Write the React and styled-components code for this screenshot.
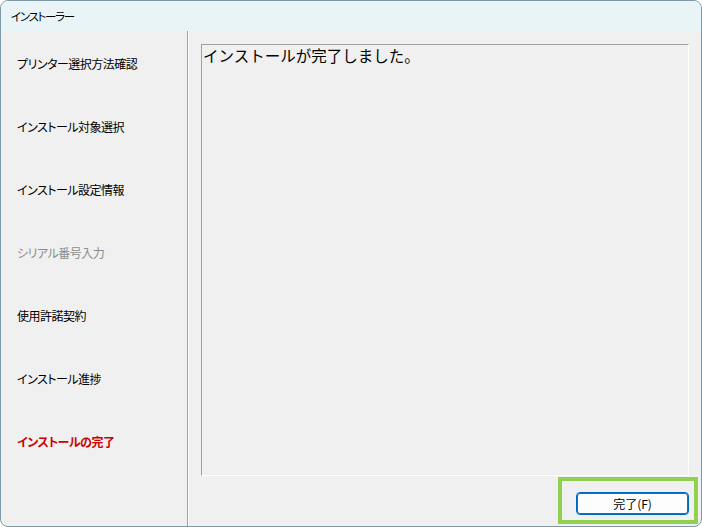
import React from "react";
import styled, { createGlobalStyle } from "styled-components";

const Global = createGlobalStyle`
  html, body { margin: 0; padding: 0; background: #ffffff; }
  body { font-family: "Noto Sans CJK JP", "Noto Sans", sans-serif; }
  * { box-sizing: border-box; }
`;

const Window = styled.div`
  width: 702px;
  height: 527px;
  border: 1px solid #7e99a6;
  border-radius: 8px;
  overflow: hidden;
  display: flex;
  flex-direction: column;
  background: #f0f0f0;
  font-feature-settings: "palt";
`;

const TitleBar = styled.div`
  height: 30px;
  flex: none;
  background: #e9f4f7;
  display: flex;
  align-items: center;
  padding-left: 10px;
  font-size: 11.5px;
  letter-spacing: -1.3px;
  color: #000;
`;

const Body = styled.div`
  flex: 1;
  display: flex;
  min-height: 0;
`;

const Sidebar = styled.div`
  width: 187px;
  flex: none;
  border-right: 1px solid #a0a0a0;
  box-shadow: 1px 0 0 #ffffff;
  padding-top: 1px;
  display: flex;
  flex-direction: column;
`;

const Step = styled.div`
  height: 63px;
  display: flex;
  align-items: center;
  padding-left: 16px;
  font-size: 12px;
  letter-spacing: -0.5px;
  color: ${(p) => (p.$state === "active" ? "#cc0000" : p.$state === "disabled" ? "#8c8c8c" : "#000")};
  font-weight: ${(p) => (p.$state === "active" ? 700 : 400)};
`;

const Main = styled.div`
  flex: 1;
  display: flex;
  flex-direction: column;
  padding: 13px 0 0 13px;
`;

const TextBox = styled.div`
  flex: 1;
  margin-right: 12px;
  border-top: 1px solid #a0a0a0;
  border-left: 1px solid #a0a0a0;
  border-right: 1px solid #ffffff;
  border-bottom: 1px solid #ffffff;
  padding: 0 0 0 1px;
  font-size: 15.5px;
  line-height: 20px;
  font-feature-settings: normal;
  color: #000;
`;

const Footer = styled.div`
  height: 50px;
  flex: none;
  display: flex;
  justify-content: flex-end;
  padding: 1px 3px 2px 0;
`;

const Highlight = styled.div`
  width: 140px;
  height: 47px;
  border: 4px solid #92d050;
  padding: 11px 5px 5px 14px;
  display: flex;
`;

const Button = styled.button`
  width: 113px;
  height: 23px;
  border: 1px solid #0067c0;
  box-shadow: inset 0 0 0 1px #0078d4;
  border-radius: 4px;
  background: #fdfdfd;
  font-family: inherit;
  font-size: 12px;
  color: #000;
  padding: 0;
  display: flex;
  align-items: center;
  justify-content: center;
`;

const steps = [
  ["プリンター選択方法確認", "normal"],
  ["インストール対象選択", "normal"],
  ["インストール設定情報", "normal"],
  ["シリアル番号入力", "disabled"],
  ["使用許諾契約", "normal"],
  ["インストール進捗", "normal"],
  ["インストールの完了", "active"],
];

export default function App() {
  return (
    <>
      <Global />
      <Window>
        <TitleBar>インストーラー</TitleBar>
        <Body>
          <Sidebar>
            {steps.map(([label, state]) => (
              <Step key={label} $state={state}>{label}</Step>
            ))}
          </Sidebar>
          <Main>
            <TextBox>インストールが完了しました。</TextBox>
            <Footer>
              <Highlight>
                <Button>完了(F)</Button>
              </Highlight>
            </Footer>
          </Main>
        </Body>
      </Window>
    </>
  );
}
